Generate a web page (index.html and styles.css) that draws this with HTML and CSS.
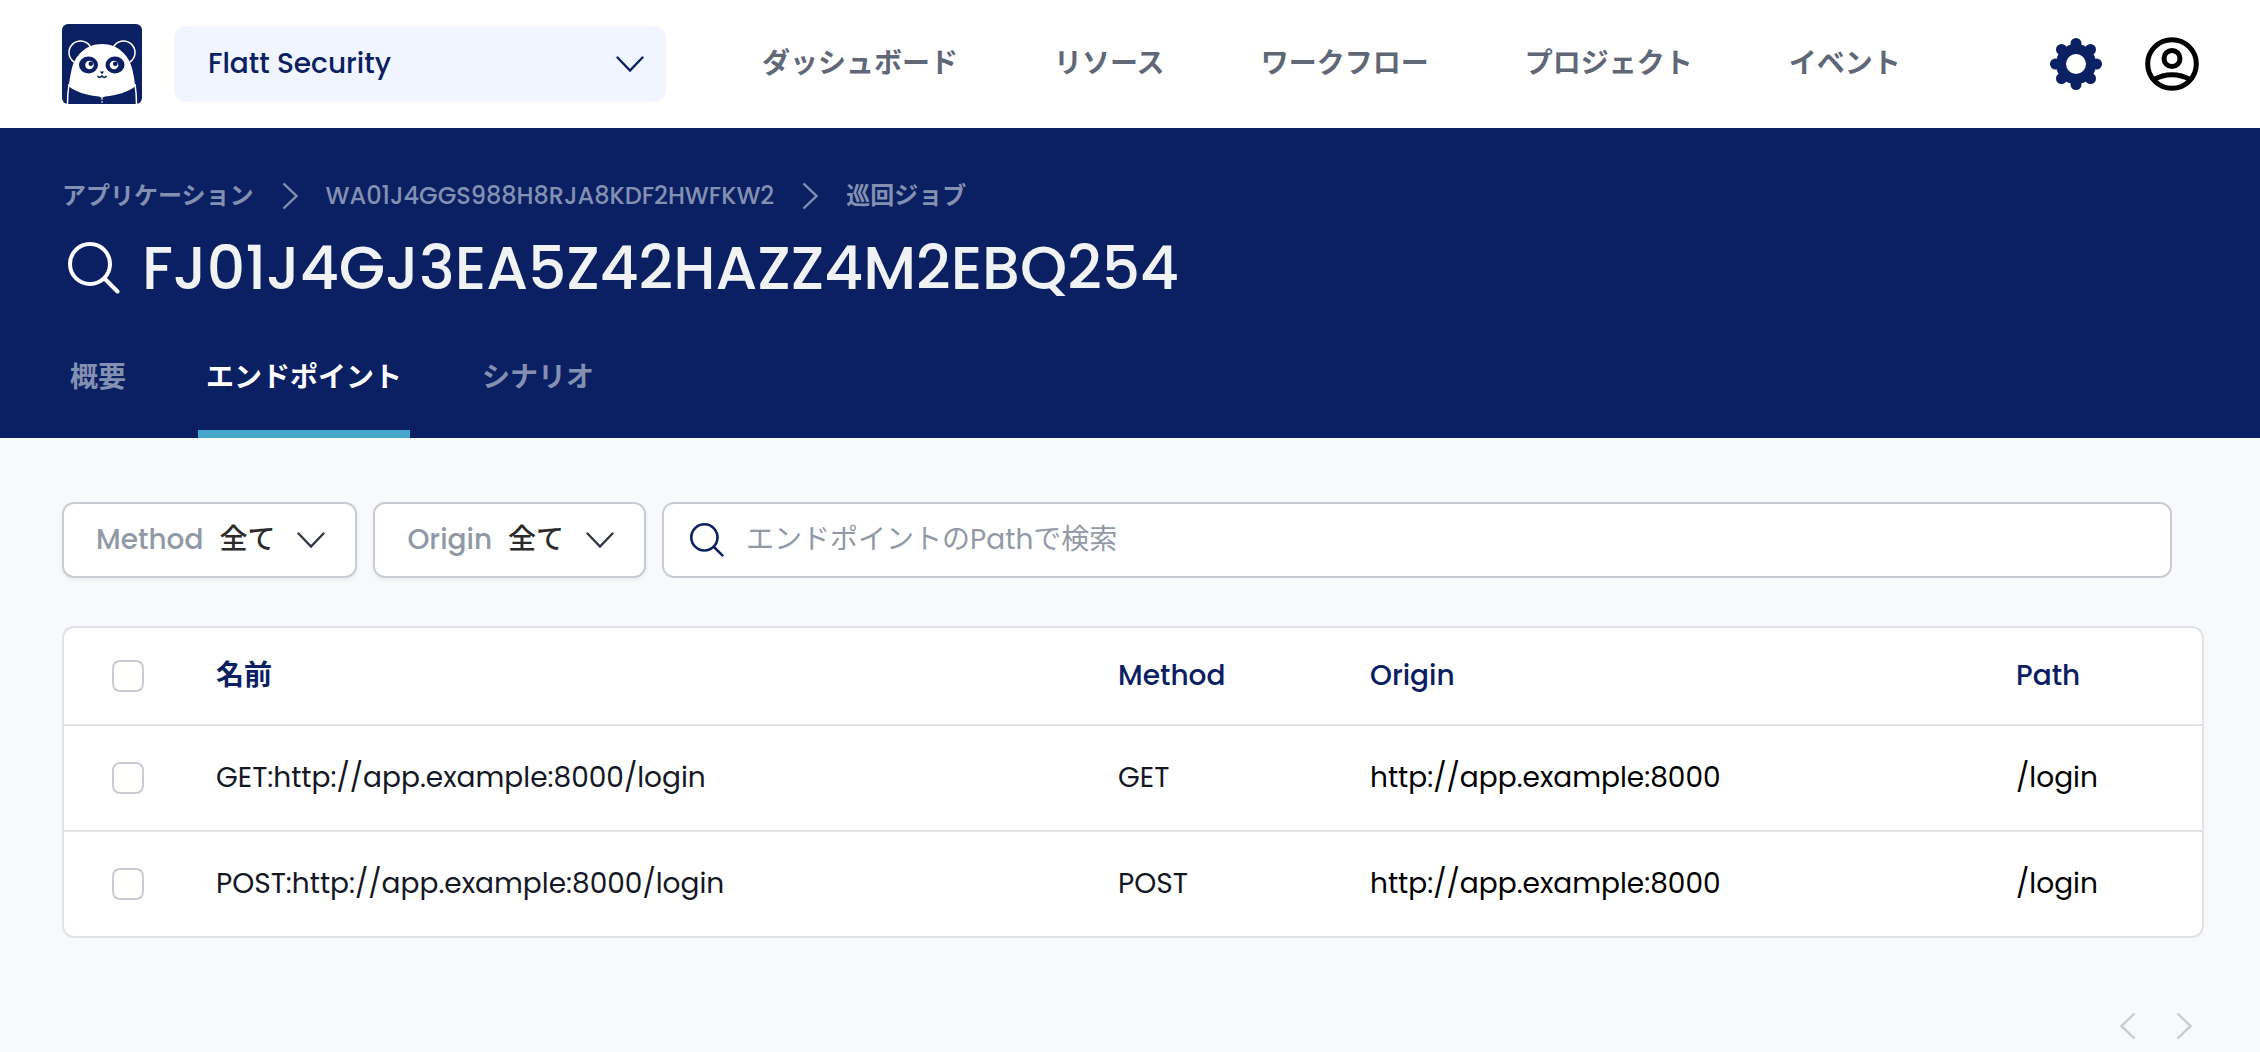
FILE: index.html
```html
<!DOCTYPE html>
<html lang="ja">
<head>
  <meta charset="utf-8">
  <meta name="viewport" content="width=device-width, initial-scale=1">
  <title>エンドポイント</title>
  <link rel="stylesheet" href="styles.css">
</head>
<body>
  <svg class="sprite" aria-hidden="true">
    <symbol id="chevron" viewBox="0 0 28 28"><path stroke-width="2.400" stroke-linecap="round" d="M1.500 7.500L14 20.500L26.500 7.500"/></symbol>
    <symbol id="chevron-right" viewBox="0 0 16 28"><path stroke-width="2.400" d="M1.500 1.500L14.500 14L1.500 26.500"/></symbol>
    <symbol id="chevron-left" viewBox="0 0 16 28"><path stroke-width="2.400" d="M14.500 1.500L1.500 14L14.500 26.500"/></symbol>
    <symbol id="search" viewBox="0 0 52 52"><circle cx="22" cy="22" r="20"/><path stroke-linecap="round" d="M36.500 36.500L49.500 49.500"/></symbol>
  </svg>

  <header class="topbar">
    <a class="logo" href="#" aria-label="ホーム">
      <svg viewBox="0 0 80 80" width="80" height="80" aria-hidden="true">
        <rect width="80" height="80" rx="6" fill="#0a2063"/>
        <g fill="#0a2063" stroke="#fff" stroke-width="1.500">
          <circle cx="18.500" cy="28.500" r="11.500"/>
          <circle cx="61.500" cy="28.500" r="11.500"/>
          <path d="M7 60Q5.500 70 5.500 80M73 60Q74.500 70 74.500 80" fill="none"/>
        </g>
        <path fill="#fff" d="M40 20C24 20 13 31 9.500 46C8 53 7 58 7 62.500C14 68 25 71.500 37 72.500L40 74L43 72.500C55 71.500 66 68 73 62.500C73 58 72 53 70.500 46C67 31 56 20 40 20Z"/>
        <ellipse cx="26.500" cy="41" rx="9.500" ry="8.500" fill="#0a2063"/>
        <ellipse cx="53" cy="41" rx="9.500" ry="8.500" fill="#0a2063"/>
        <circle cx="27.500" cy="41" r="4.300" fill="#fff"/>
        <circle cx="52" cy="41" r="4.300" fill="#fff"/>
        <circle cx="28.800" cy="39.700" r="2.300" fill="#0a2063"/>
        <circle cx="53.300" cy="39.700" r="2.300" fill="#0a2063"/>
        <path d="M37.800 47.500H42.200L40 50.200Z" fill="#0a2063"/>
        <path d="M35.500 52Q37.500 54.800 40 52Q42.500 54.800 44.500 52" fill="none" stroke="#0a2063" stroke-width="1.500"/>
        <path d="M40 74V80" stroke="#fff" stroke-width="1" stroke-dasharray="2 1"/>
      </svg>
    </a>
    <div class="org">
      <select class="org-select" aria-label="組織">
        <option>Flatt Security</option>
      </select>
      <svg class="icon chevron org-chevron" aria-hidden="true"><use href="#chevron"/></svg>
    </div>
    <nav class="nav" aria-label="メイン">
      <a href="#">ダッシュボード</a>
      <a href="#">リソース</a>
      <a href="#">ワークフロー</a>
      <a href="#">プロジェクト</a>
      <a href="#">イベント</a>
    </nav>
    <div class="tools">
      <button class="icon-button" type="button" aria-label="設定">
        <svg viewBox="-27 -27 54 54" width="54" height="54" aria-hidden="true">
          <path fill="none" stroke="#0a2063" stroke-width="10" d="M15 0A15 15 0 1 1 -15 0A15 15 0 1 1 15 0"/>
          <g fill="#0a2063">
            <circle cx="0" cy="-20.500" r="5.500"/><circle cx="14.500" cy="-14.500" r="5.500"/>
            <circle cx="20.500" cy="0" r="5.500"/><circle cx="14.500" cy="14.500" r="5.500"/>
            <circle cx="0" cy="20.500" r="5.500"/><circle cx="-14.500" cy="14.500" r="5.500"/>
            <circle cx="-20.500" cy="0" r="5.500"/><circle cx="-14.500" cy="-14.500" r="5.500"/>
          </g>
        </svg>
      </button>
      <button class="icon-button" type="button" aria-label="アカウント">
        <svg viewBox="-27 -27 54 54" width="54" height="54" fill="none" stroke="#000" stroke-width="5" aria-hidden="true">
          <circle r="24.300"/>
          <circle cy="-5.500" r="8"/>
          <path d="M-18 15.500C-7 9 7 9 18 15.500"/>
        </svg>
      </button>
    </div>
  </header>

  <section class="hero">
    <nav class="crumbs" aria-label="パンくず">
      <a class="jp" href="#">アプリケーション</a>
      <svg class="icon crumb-sep" aria-hidden="true"><use href="#chevron-right"/></svg>
      <a href="#">WA01J4GGS988H8RJA8KDF2HWFKW2</a>
      <svg class="icon crumb-sep" aria-hidden="true"><use href="#chevron-right"/></svg>
      <a class="jp" href="#">巡回ジョブ</a>
    </nav>
    <h1 class="title">
      <svg class="icon title-icon" aria-hidden="true"><use href="#search"/></svg>
      <span>FJ01J4GJ3EA5Z42HAZZ4M2EBQ254</span>
    </h1>
    <nav class="tabs" aria-label="タブ">
      <a class="tab" href="#">概要</a>
      <a class="tab tab-active" href="#" aria-current="page">エンドポイント</a>
      <a class="tab" href="#">シナリオ</a>
    </nav>
  </section>

  <main class="content">
    <div class="filters">
      <label class="field filter">
        <span class="filter-name">Method</span>
        <select class="filter-select"><option>全て</option></select>
        <svg class="icon chevron" aria-hidden="true"><use href="#chevron"/></svg>
      </label>
      <label class="field filter">
        <span class="filter-name">Origin</span>
        <select class="filter-select"><option>全て</option></select>
        <svg class="icon chevron" aria-hidden="true"><use href="#chevron"/></svg>
      </label>
      <label class="field search">
        <svg class="icon search-icon" aria-hidden="true"><use href="#search"/></svg>
        <input class="search-input" type="text" placeholder="エンドポイントのPathで検索" aria-label="エンドポイントのPathで検索">
      </label>
    </div>

    <div class="panel">
      <table class="table">
        <colgroup>
          <col class="col-check"><col><col class="col-method"><col class="col-origin"><col class="col-path">
        </colgroup>
        <thead>
          <tr>
            <th class="check"><input type="checkbox" aria-label="すべて選択"></th>
            <th class="jp">名前</th><th>Method</th><th>Origin</th><th>Path</th>
          </tr>
        </thead>
        <tbody>
          <tr>
            <td class="check"><input type="checkbox" aria-label="GET /login を選択"></td>
            <td>GET:http://app.example:8000/login</td><td>GET</td>
            <td class="strong">http://app.example:8000</td><td class="strong">/login</td>
          </tr>
          <tr>
            <td class="check"><input type="checkbox" aria-label="POST /login を選択"></td>
            <td>POST:http://app.example:8000/login</td><td>POST</td>
            <td class="strong">http://app.example:8000</td><td class="strong">/login</td>
          </tr>
        </tbody>
      </table>
    </div>

    <div class="pager">
      <button class="icon-button" type="button" aria-label="前へ"><svg class="icon pager-icon" aria-hidden="true"><use href="#chevron-left"/></svg></button>
      <button class="icon-button" type="button" aria-label="次へ"><svg class="icon pager-icon" aria-hidden="true"><use href="#chevron-right"/></svg></button>
    </div>
  </main>
</body>
</html>
```
FILE: styles.css
```css
:root {
  --navy: #0a2063;
  --line: #e1e2e8;
  --field-line: #c9ccd4;
  --muted: #9299a6;
  --on-navy: #8490b1;
}

* {
  box-sizing: border-box;
}

body {
  margin: 0;
  background: #f8f9fb;
  color: #141824;
  font-family: Poppins, Inter, "Noto Sans CJK JP", sans-serif;
  font-size: 28px;
  line-height: 40px;
}

a {
  color: inherit;
  text-decoration: none;
}

select,
input,
button {
  margin: 0;
  padding: 0;
  border: 0;
  background: none;
  color: inherit;
  font: inherit;
}

select {
  appearance: none;
  cursor: pointer;
}

.sprite {
  display: none;
}

.icon {
  flex: none;
  fill: none;
  stroke: currentColor;
  pointer-events: none;
}

.chevron {
  width: 28px;
  height: 28px;
}

.icon-button {
  display: flex;
  cursor: pointer;
}

/* Top bar */
.topbar {
  display: flex;
  align-items: center;
  height: 128px;
  padding: 0 61px 0 62px;
  background: #fff;
}

.logo {
  display: flex;
  margin-right: 32px;
}

.org {
  display: grid;
  align-items: center;
  width: 492px;
  color: var(--navy);
  font-weight: 500;
}

.org-select,
.org-chevron {
  grid-area: 1 / 1;
}

.org-select {
  height: 76px;
  padding: 0 64px 0 34px;
  border-radius: 12px;
  background: #f0f5ff;
}

.org-chevron {
  justify-self: end;
  margin-right: 22px;
}

.nav {
  display: flex;
  gap: 96px;
  margin-left: 96px;
  color: #606776;
  font-weight: 700;
  white-space: nowrap;
}

.tools {
  display: flex;
  gap: 42px;
  margin-left: auto;
}

/* Page heading */
.hero {
  padding: 50px 62px 0;
  background: var(--navy);
  color: var(--on-navy);
}

.crumbs {
  display: flex;
  align-items: center;
  gap: 28px;
  font-size: 24px;
  font-weight: 500;
  line-height: 36px;
}

.jp,
.table .jp {
  font-weight: 700;
}

.crumb-sep {
  width: 16px;
  height: 28px;
}

.title {
  display: flex;
  align-items: center;
  gap: 22px;
  margin: 18px 0 0;
  padding-left: 6px;
  color: #f1f2f4;
  font-size: 60px;
  font-weight: 500;
  line-height: 72px;
}

.title-icon {
  width: 52px;
  height: 52px;
  color: #fff;
  stroke-width: 4;
}

.tabs {
  display: flex;
  gap: 64px;
  margin-top: 54px;
  font-weight: 700;
}

.tab {
  padding: 0 8px 32px;
  border-bottom: 8px solid transparent;
}

.tab-active {
  border-color: #44a7cb;
  color: #fff;
}

/* Filters */
.content {
  padding: 64px 56px 0 62px;
}

.filters {
  display: flex;
  gap: 16px;
  margin-right: 32px;
}

.field {
  display: flex;
  align-items: center;
  height: 76px;
  border: 2px solid var(--field-line);
  border-radius: 12px;
  background: #fff;
}

.filter {
  padding: 0 30px 0 32px;
  box-shadow: 0 2px 4px rgb(0 0 0 / 6%);
  color: #303848;
  font-weight: 500;
}

.filter-name {
  margin-right: 16px;
  color: var(--muted);
}

.filter-select {
  margin-right: 21px;
  color: #2b2b2b;
}

.search {
  flex: 1;
  gap: 22px;
  padding: 0 26px;
  color: var(--navy);
}

.search-icon {
  width: 34px;
  height: 34px;
  stroke-width: 4;
}

.search-input {
  flex: 1;
  min-width: 0;
  height: 40px;
  outline: none;
}

.search-input::placeholder {
  color: var(--muted);
  opacity: 1;
}

/* Endpoint table */
.panel {
  overflow: hidden;
  margin-top: 48px;
  border: 2px solid var(--line);
  border-radius: 12px;
  background: #fff;
}

.table {
  width: 100%;
  border-spacing: 0;
  table-layout: fixed;
}

.col-check { width: 152px; }
.col-method { width: 252px; }
.col-origin { width: 646px; }
.col-path { width: 186px; }

.table th,
.table td {
  height: 106px;
  padding: 0;
  border-bottom: 2px solid var(--line);
  text-align: left;
  vertical-align: middle;
}

.table th {
  height: 98px;
  color: var(--navy);
  font-weight: 500;
}

.table tbody tr:last-child td {
  height: 104px;
  border-bottom: 0;
}

.table .check {
  padding-left: 48px;
}

.check input {
  display: block;
  width: 32px;
  height: 32px;
  border: 2px solid var(--field-line);
  border-radius: 8px;
  background: #fff;
  appearance: none;
}

.check input:checked {
  background: var(--navy);
}

.table .strong {
  color: #000;
}

.pager {
  display: flex;
  justify-content: flex-end;
  gap: 40px;
  margin-top: 74px;
  padding-right: 12px;
  color: var(--field-line);
}

.pager-icon {
  width: 16px;
  height: 28px;
}
```
